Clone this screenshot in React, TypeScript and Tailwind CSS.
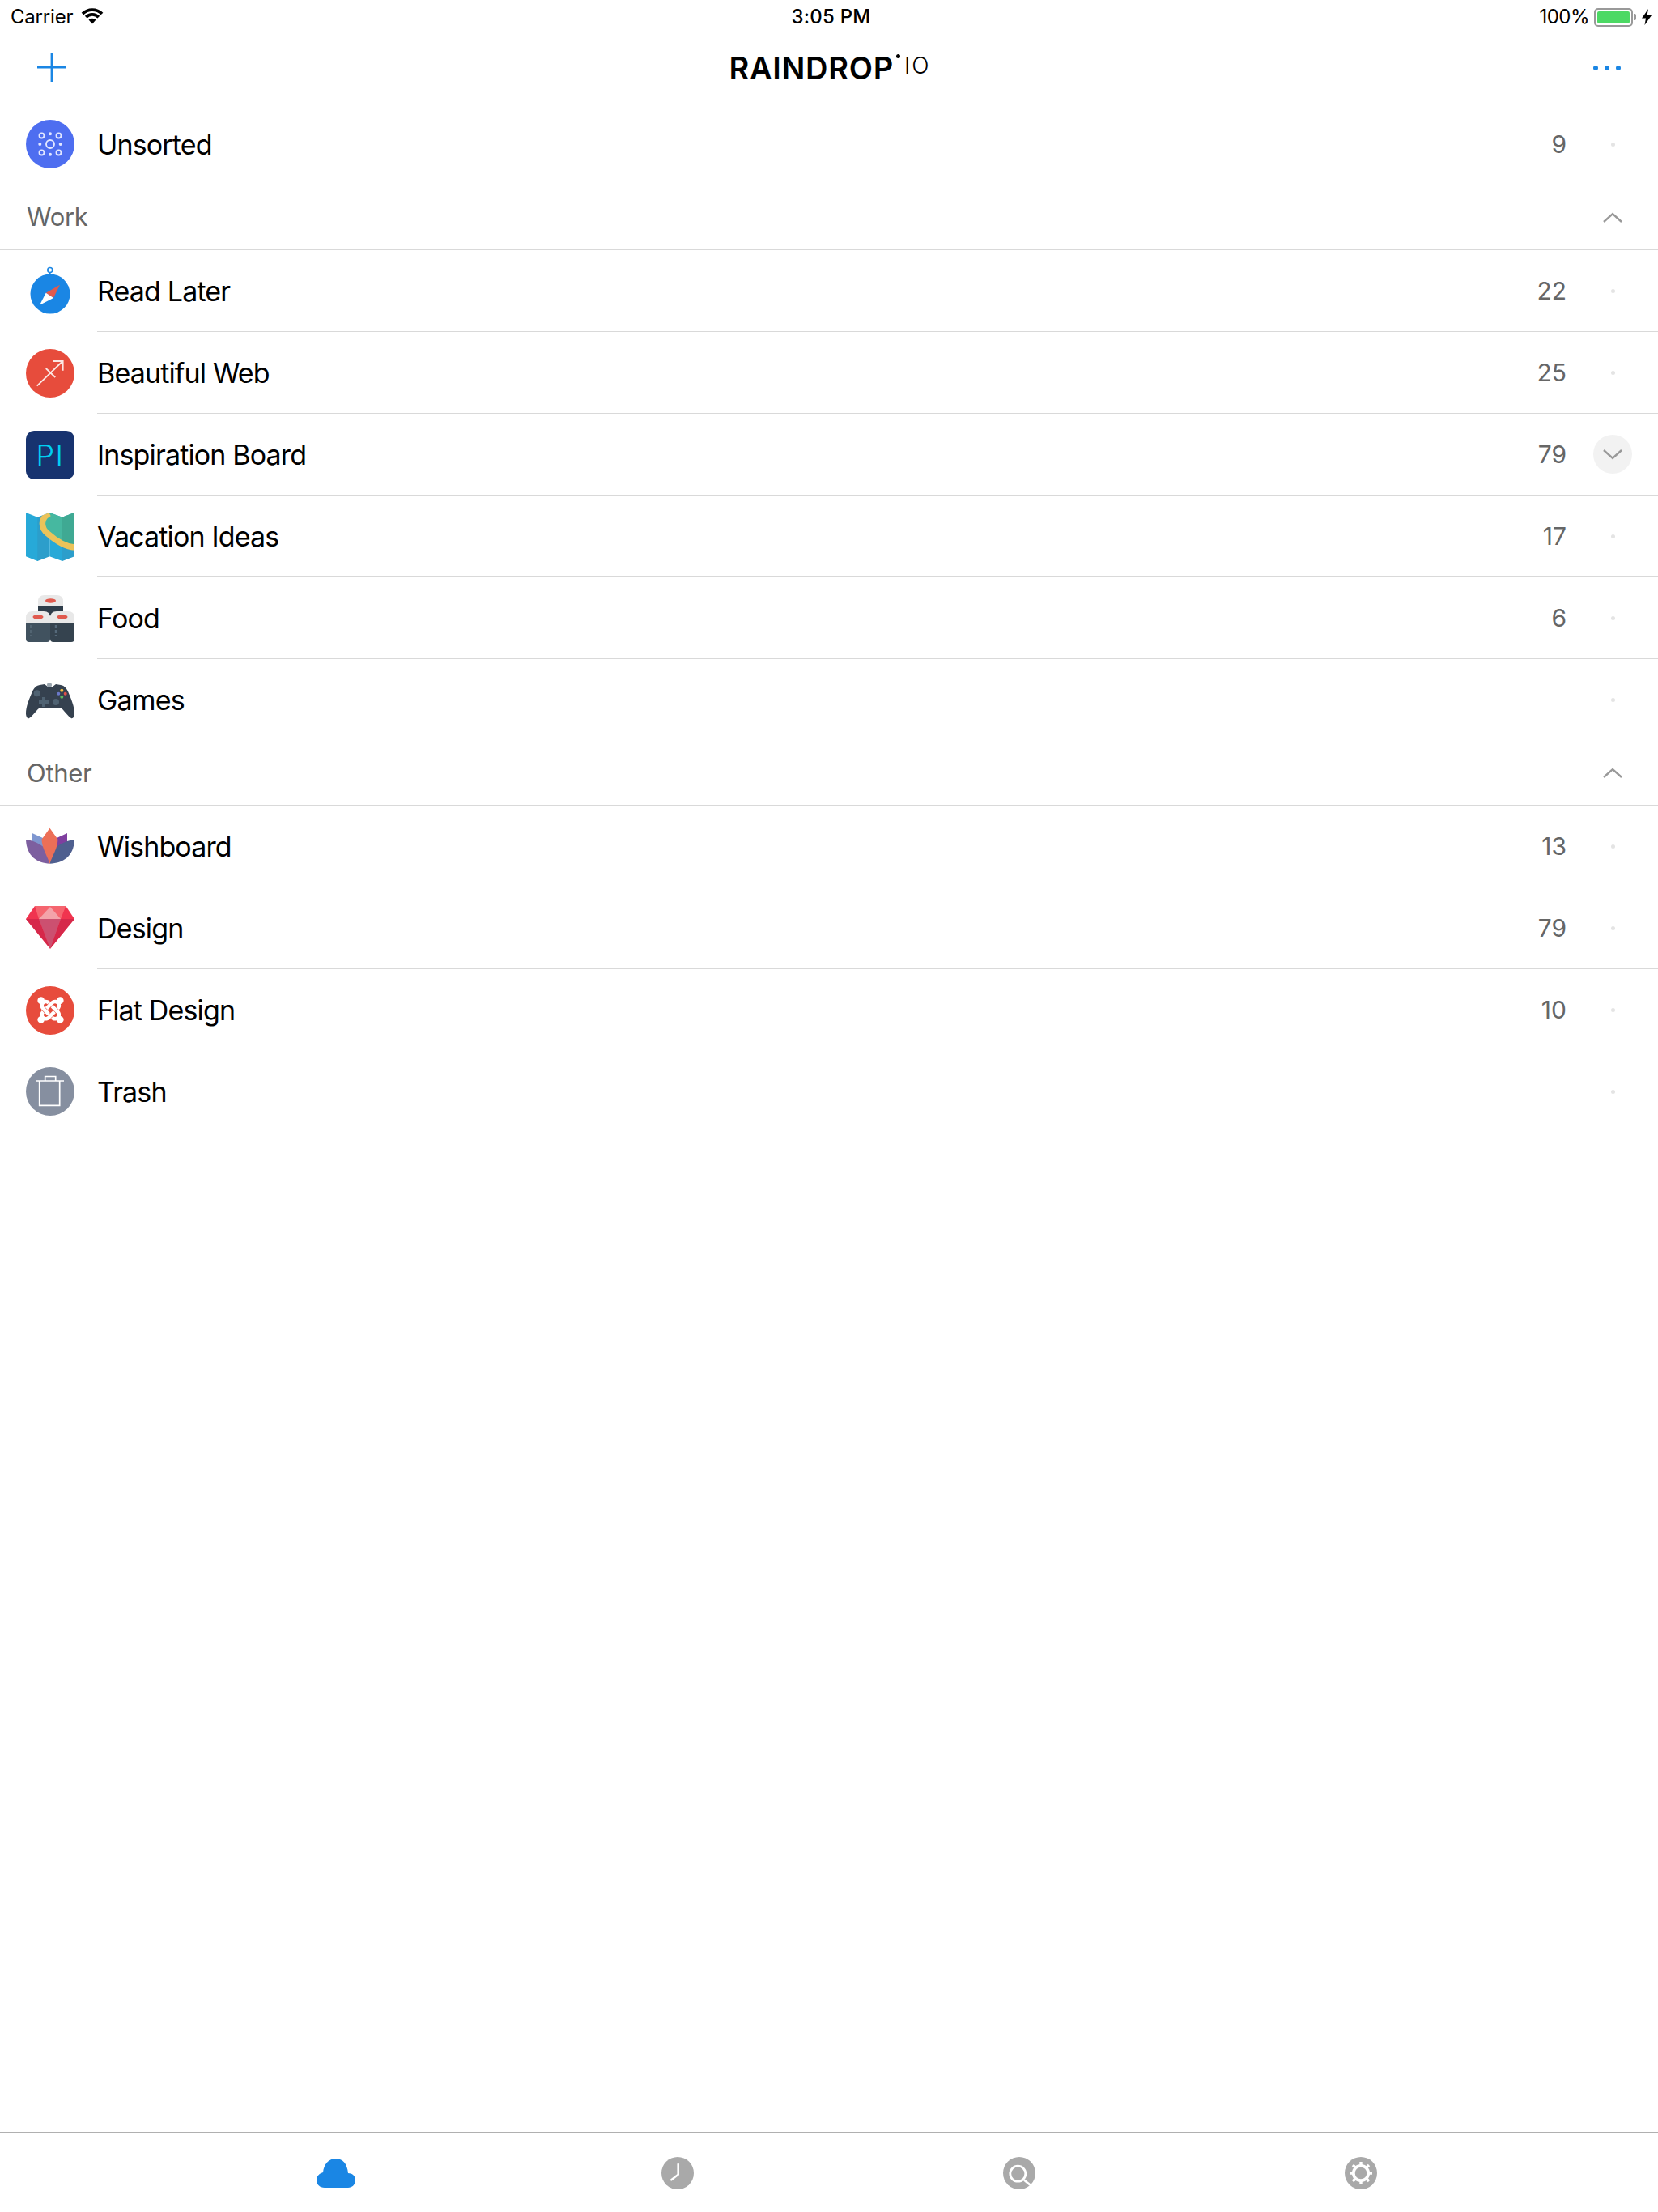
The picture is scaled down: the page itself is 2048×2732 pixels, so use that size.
import { ReactNode } from "react";
import { FaJoomla } from "react-icons/fa";

const B = "#1a86e4";

function Ico({ children }: { children: ReactNode }) {
  return (
    <svg width="60" height="60" viewBox="0 0 60 60" className="block overflow-visible">
      {children}
    </svg>
  );
}

function Unsorted() {
  const c = "#e2e7ff";
  return (
    <Ico>
      <circle cx="30" cy="30" r="30" fill="#4e6ef0" />
      <g fill="none" stroke={c} strokeWidth="1.9">
        <circle cx="30" cy="30" r="5" />
        <circle cx="19.5" cy="19.5" r="3" />
        <circle cx="40.5" cy="19.5" r="3" />
        <circle cx="19.5" cy="40.5" r="3" />
        <circle cx="40.5" cy="40.5" r="3" />
      </g>
      <g fill={c}>
        <circle cx="30" cy="17.3" r="2" />
        <circle cx="30" cy="42.7" r="2" />
        <circle cx="17.3" cy="30" r="2" />
        <circle cx="42.7" cy="30" r="2" />
      </g>
    </Ico>
  );
}

function Compass() {
  return (
    <Ico>
      <circle cx="30" cy="33" r="24.5" fill={B} />
      <circle cx="29.8" cy="3.5" r="3" fill="none" stroke={B} strokeWidth="1.6" />
      <path d="M29.8 6.5V9" stroke={B} strokeWidth="1.6" />
      <path d="M42 21.7 24.7 31.7 34 38Z" fill="#e05a4e" />
      <path d="M17 46.7 24.7 31.7 34 38Z" fill="#fff" />
    </Ico>
  );
}

function Arrow() {
  return (
    <Ico>
      <circle cx="30" cy="30" r="30" fill="#e74c3c" />
      <path d="M13.7 45.7 45.5 15M33 15H45.7V26.7M24.7 24 36.3 35" fill="none" stroke="#fbe6e3" strokeWidth="1.8" />
    </Ico>
  );
}

function Pi() {
  return (
    <div className="flex h-[60px] w-[60px] items-center justify-center rounded-[10px] bg-[#17336f] text-[36px] leading-none font-light tracking-[1.5px] text-[#00d0f2]">
      PI
    </div>
  );
}

function MapIcon() {
  return (
    <Ico>
      <defs>
        <clipPath id="mapclip">
          <path d="M0 0 14.3 5.7 29.3 0 45 5.7 60 0V54.3L45 60 29.3 54.3 14.3 60 0 54.3Z" />
        </clipPath>
      </defs>
      <g clipPath="url(#mapclip)">
        <rect width="15" height="60" fill="#27a9d8" />
        <rect x="14.3" width="15" height="60" fill="#2c9ecb" />
        <rect x="29.3" width="16" height="60" fill="#27a9d8" />
        <rect x="45" width="15" height="60" fill="#2c9ecb" />
        <path d="M29 1C19 6 17 18 27 26 36 34 48 43 62 43V0Z" fill="#46b8a0" />
        <rect x="45" width="15" height="40" fill="#3fa993" />
        <path d="M29 1C19 6 17 18 27 26 36 34 48 43 62 43" fill="none" stroke="#ecc35a" strokeWidth="7.500" />
      </g>
    </Ico>
  );
}

function Roll({ x, y, w, h, dark }: { x: number; y: number; w: number; h: number; dark: string }) {
  return (
    <g>
      <rect x={x} y={y + 8} width={w} height={h - 8} rx="4" fill={dark} />
      <path d={`M${x} ${y + 14}V${y + 8}Q${x} ${y} ${x + 8} ${y}H${x + w - 8}Q${x + w} ${y} ${x + w} ${y + 8}V${y + 14}Z`} fill="#e8e8e8" />
      <ellipse cx={x + w / 2} cy={y + 7} rx="6.500" ry="2.700" fill="#e05a4e" />
    </g>
  );
}

function Sushi() {
  return (
    <Ico>
      <Roll x={15} y={1} w={31} h={26} dark="#2e3d4a" />
      <Roll x={0} y={21} w={30} h={38} dark="#41525f" />
      <Roll x={30} y={21} w={30} h={38} dark="#35434f" />
      <path d="M6 38V52" stroke="#5a6d7b" strokeWidth="1.4" strokeDasharray="4 2" />
      <path d="M37 38V52" stroke="#55697a" strokeWidth="2.4" strokeDasharray="4 2" />
    </Ico>
  );
}

function Controller() {
  return (
    <Ico>
      <path d="M17 11 23 10 27 13H33L37 10 43 11C48 12 50 15 52 19 56 28 60 38 60 46 60 50 58 53 56 52 52 50 47 42 44 40H16C13 42 8 50 4 52 2 53 0 50 0 46 0 38 4 28 8 19 10 15 12 12 17 11Z" fill="#35414f" />
      <circle cx="29" cy="11" r="3" fill="#9aa5ae" />
      <circle cx="13.7" cy="21.3" r="4" fill="#4f6272" />
      <circle cx="37" cy="32" r="4" fill="#4f6272" />
      <path d="M16 32H28M22 26V38" stroke="#4f6272" strokeWidth="4" />
      <circle cx="44.3" cy="17.7" r="2" fill="#f5c242" />
      <circle cx="48.7" cy="21.7" r="2" fill="#e0524a" />
      <circle cx="44.3" cy="25.7" r="2" fill="#5cb85c" />
      <circle cx="40.3" cy="21.7" r="2" fill="#6a78c8" />
    </Ico>
  );
}

function Lotus() {
  return (
    <Ico>
      <path d="M7.7 13 21 19 24 34 8 28Z" fill="#7f97d0" />
      <path d="M51 13 38 19 36 34 51 28Z" fill="#7f3f9f" />
      <path d="M0 21.3C12 22 24 30 28 38L29.5 50.7C14 50 1 42 0 21.3Z" fill="#7d5f9f" />
      <path d="M60 21.3C48 22 35 30 31 38L29.5 50.7C46 50 59 42 60 21.3Z" fill="#4f5f8f" />
      <path d="M29.5 6.7 39.5 20.7C39 32 33 40 29.5 50.7 26 40 20 32 19.5 20.7Z" fill="#ec6f57" />
    </Ico>
  );
}

function Gem() {
  return (
    <Ico>
      <path d="M11 2H49.3L60 18 30 54.7 0 18Z" fill="#f0344f" />
      <path d="M11 2H49.3L43 18H16Z" fill="#f5656f" />
      <path d="M0 18H16L30 54.7Z" fill="#d6284a" />
      <path d="M60 18H43L30 54.7Z" fill="#d6284a" />
      <path d="M16 18H43L30 54.7Z" fill="#cc5070" />
      <path d="M30 3 43 18H16Z" fill="#f3a3aa" />
    </Ico>
  );
}

function Joomla() {
  return (
    <div className="flex h-[60px] w-[60px] items-center justify-center rounded-full bg-[#e74c3c] text-white">
      <FaJoomla size={37} />
    </div>
  );
}

function Trash() {
  return (
    <Ico>
      <circle cx="30" cy="30" r="30" fill="#868fa0" />
      <path d="M16.7 17V47.3H41.7V17M13 17H47M23.7 17V11.5H36.7V17" fill="none" stroke="#fff" strokeWidth="1.7" />
    </Ico>
  );
}

function Row({
  icon,
  name,
  count,
  line = true,
  open = false,
  h = "h-[101px]",
}: {
  icon: ReactNode;
  name: string;
  count?: number;
  line?: boolean;
  open?: boolean;
  h?: string;
}) {
  return (
    <div className={`flex items-center ${h}`}>
      <div className="ml-[32px] h-[60px] w-[60px] shrink-0">{icon}</div>
      <div className={`ml-[28px] flex h-full flex-1 items-center ${line ? "border-b border-[#d9d9d9]" : ""}`}>
        <span className="flex-1 text-[34px] tracking-[-0.85px] text-black">{name}</span>
        <span className="text-[30px] text-[#666666]">{count}</span>
        <div className="mr-[32px] ml-[33px] flex h-[48px] w-[48px] items-center justify-center">
          {open ? (
            <div className="flex h-[48px] w-[48px] items-center justify-center rounded-full bg-[#f2f2f2]">
              <Chevron down />
            </div>
          ) : (
            <div className="h-[5px] w-[5px] rounded-full bg-[#e4e4e4]" />
          )}
        </div>
      </div>
    </div>
  );
}

function Chevron({ down = false }: { down?: boolean }) {
  return (
    <svg width="24" height="14" viewBox="0 0 24 14" className="block">
      <path d={down ? "M1 2 12 12 23 2" : "M1 12 12 2 23 12"} fill="none" stroke="#999999" strokeWidth="2.4" />
    </svg>
  );
}

function Section({ title, h }: { title: string; h: string }) {
  return (
    <div className={`flex items-center justify-between border-b border-[#d9d9d9] pt-[1px] pr-[32px] pl-[33px] ${h}`}>
      <span className="text-[31px] tracking-[-0.3px] text-[#666666]">{title}</span>
      <div className="flex w-[48px] justify-center">
        <Chevron />
      </div>
    </div>
  );
}

function TabCircle({ children }: { children: ReactNode }) {
  return (
    <svg width="40" height="40" viewBox="-20 -20 40 40" className="block">
      <circle r="20" fill="#a9a9a9" />
      {children}
    </svg>
  );
}

export default function App() {
  return (
    <div className="flex h-[2732px] w-[2048px] flex-col bg-white font-['Inter',sans-serif]">
      {/* status bar */}
      <div className="grid h-[40px] shrink-0 grid-cols-3 items-center pt-[2px] pr-[8px] pl-[13px] text-[24px] text-black">
        <div className="flex items-center gap-[10px]">
          <span className="tracking-[-0.2px]">Carrier</span>
          <svg width="28" height="20" viewBox="0 0 28 20" className="mb-[3px]">
            <path d="M2 7A17 17 0 0 1 26 7M6.2 11.2A11 11 0 0 1 21.8 11.2" fill="none" stroke="#000" strokeWidth="3.8" />
            <path d="M14 19.500 9.500 14.600A6.500 6.500 0 0 1 18.500 14.600Z" />
          </svg>
        </div>
        <div className="text-center font-medium tracking-[0.2px]">3:05 PM</div>
        <div className="flex items-center justify-end gap-[6px]">
          <span className="tracking-[-0.5px]">100%</span>
          <div className="flex items-center">
            <div className="h-[23px] w-[48px] rounded-[5px] border-2 border-[#999999] p-[2px]">
              <div className="h-full w-full rounded-[2px] bg-[#4cd964]" />
            </div>
            <div className="ml-[1px] h-[8px] w-[3px] rounded-r-[2px] bg-[#999999]" />
          </div>
          <svg width="12" height="20" viewBox="0 0 12 20" className="ml-[1px]">
            <path d="M8 0 0 11.5H5L3.5 20 12 8H6.5Z" />
          </svg>
        </div>
      </div>

      {/* nav */}
      <div className="flex h-[88px] shrink-0 items-center justify-between pr-[46px] pl-[46px]">
        <svg width="36" height="36" viewBox="0 0 36 36" className="mt-[-3px] block">
          <path d="M18 0V36M0 18H36" stroke={B} strokeWidth="2.8" />
        </svg>
        <div className="mt-[-1px] flex items-start text-black">
          <span className="text-[38px] leading-none font-semibold tracking-[0.7px]">RAINDROP</span>
          <span className="mt-[2px] ml-[3px] h-[5px] w-[5px] rounded-full bg-black" />
          <span className="mt-[2px] ml-[5px] text-[28px] leading-none font-light tracking-[2px]">IO</span>
        </div>
        <div className="mt-[-1px] flex gap-[8px]">
          <div className="h-[6px] w-[6px] rounded-full bg-[#1a86e4]" />
          <div className="h-[6px] w-[6px] rounded-full bg-[#1a86e4]" />
          <div className="h-[6px] w-[6px] rounded-full bg-[#1a86e4]" />
        </div>
      </div>

      {/* list */}
      <div className="flex-1">
        <Row icon={<Unsorted />} name="Unsorted" count={9} line={false} h="h-[100px]" />
        <Section title="Work" h="h-[81px]" />
        <Row icon={<Compass />} name="Read Later" count={22} />
        <Row icon={<Arrow />} name="Beautiful Web" count={25} />
        <Row icon={<Pi />} name="Inspiration Board" count={79} open />
        <Row icon={<MapIcon />} name="Vacation Ideas" count={17} />
        <Row icon={<Sushi />} name="Food" count={6} />
        <Row icon={<Controller />} name="Games" line={false} />
        <Section title="Other" h="h-[80px]" />
        <Row icon={<Lotus />} name="Wishboard" count={13} />
        <Row icon={<Gem />} name="Design" count={79} />
        <Row icon={<Joomla />} name="Flat Design" count={10} line={false} />
        <Row icon={<Trash />} name="Trash" line={false} h="h-[100px]" />
      </div>

      {/* tabs */}
      <div className="grid h-[99px] shrink-0 grid-cols-[422px_422px_422px_422px] items-center justify-start border-t-2 border-[#b0b0b0] pl-[204px]">
        <div className="flex justify-center">
          <svg width="48" height="36" viewBox="0 0 48 36" className="block">
            <path d="M10 36C4 36 0 32 0 26.5 0 22 3 18.500 8 17 9 7 15 0 24 0 32 0 38 6 39 18 44 18 48 21 48 27 48 32 44 36 39 36Z" fill={B} />
          </svg>
        </div>
        <div className="flex justify-center">
          <TabCircle>
            <path d="M0.7 -11V1.7L-7.700 8.300" fill="none" stroke="#fff" strokeWidth="2.6" strokeLinecap="round" />
          </TabCircle>
        </div>
        <div className="flex justify-center">
          <TabCircle>
            <circle cx="-1.7" cy="0.7" r="9.500" fill="none" stroke="#fff" strokeWidth="2.8" />
            <path d="M6 8.500 14 15" stroke="#fff" strokeWidth="2.8" />
          </TabCircle>
        </div>
        <div className="flex justify-center">
          <TabCircle>
            <circle r="9.200" fill="none" stroke="#fff" strokeWidth="3.800" />
            <path d="M0 -14V-10M0 14V10M-14 0H-10M14 0H10M-10 -10-7 -7M10 10 7 7M-10 10-7 7M10 -10 7 -7" stroke="#fff" strokeWidth="3.400" />
          </TabCircle>
        </div>
      </div>
    </div>
  );
}
